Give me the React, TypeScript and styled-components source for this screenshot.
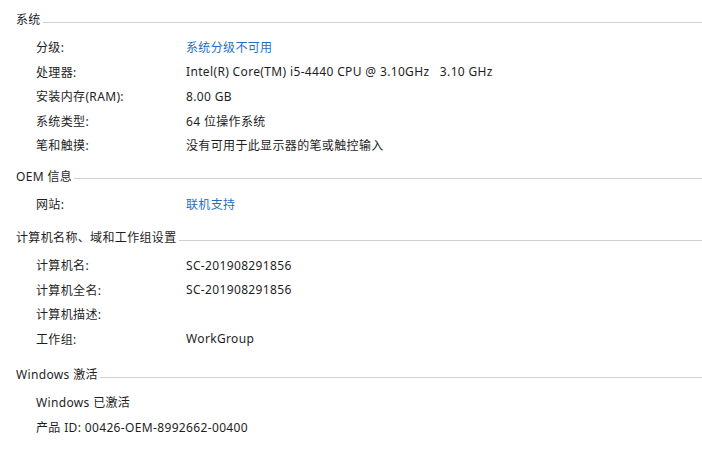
import React from 'react';
import styled, { createGlobalStyle } from 'styled-components';

const GlobalStyle = createGlobalStyle`
  html, body {
    margin: 0;
    padding: 0;
    background: #ffffff;
  }
  body {
    font-family: "Segoe UI", "Noto Sans", "Noto Sans CJK SC", sans-serif;
    font-size: 12px;
    letter-spacing: 0.35px;
    color: #1e1e1e;
  }
`;

type Row = { label: string; value?: string; link?: boolean };
type Group = { title: string; rows: Row[]; full?: boolean; top: number };

const groups: Group[] = [
  {
    title: '系统',
    top: 0,
    rows: [
      { label: '分级:', value: '系统分级不可用', link: true },
      { label: '处理器:', value: 'Intel(R) Core(TM) i5-4440 CPU @ 3.10GHz   3.10 GHz' },
      { label: '安装内存(RAM):', value: '8.00 GB' },
      { label: '系统类型:', value: '64 位操作系统' },
      { label: '笔和触摸:', value: '没有可用于此显示器的笔或触控输入' },
    ],
  },
  {
    title: 'OEM 信息',
    top: 7,
    rows: [{ label: '网站:', value: '联机支持', link: true }],
  },
  {
    title: '计算机名称、域和工作组设置',
    top: 10,
    rows: [
      { label: '计算机名:', value: 'SC-201908291856' },
      { label: '计算机全名:', value: 'SC-201908291856' },
      { label: '计算机描述:', value: '' },
      { label: '工作组:', value: 'WorkGroup' },
    ],
  },
  {
    title: 'Windows 激活',
    top: 12,
    full: true,
    rows: [{ label: 'Windows 已激活' }, { label: '产品 ID: 00426-OEM-8992662-00400' }],
  },
];

const App: React.FC = () => {
  return (
    <>
      <GlobalStyle />
      <Page>
        {groups.map((g) => (
          <Section key={g.title} $top={g.top}>
            <Header>
              <HeaderText>{g.title}</HeaderText>
              <Rule />
            </Header>
            <Rows>
              {g.rows.map((r) =>
                g.full ? (
                  <InfoRow key={r.label}>
                    <Wide>{r.label}</Wide>
                  </InfoRow>
                ) : (
                  <InfoRow key={r.label}>
                    <Label>{r.label}</Label>
                    <Value $link={r.link}>{r.value}</Value>
                  </InfoRow>
                )
              )}
            </Rows>
          </Section>
        ))}
      </Page>
    </>
  );
};

const Page = styled.div`
  width: 702px;
  padding-top: 8px;
  display: flex;
  flex-direction: column;
`;

const Section = styled.section<{ $top: number }>`
  display: flex;
  flex-direction: column;
  gap: 3px;
  margin-top: ${(p) => p.$top}px;
`;

const Header = styled.div`
  display: flex;
  align-items: center;
  height: 24px;
  padding-left: 16px;
`;

const HeaderText = styled.span`
  white-space: nowrap;
  line-height: 24px;
`;

const Rule = styled.div`
  flex: 1;
  height: 0;
  margin-left: 2px;
  margin-top: 4px;
  border-top: 1px solid #cfcfcf;
`;

const Rows = styled.div`
  display: flex;
  flex-direction: column;
  padding-left: 36px;
`;

const InfoRow = styled.div`
  display: grid;
  grid-template-columns: 150px 1fr;
  height: 24.5px;
  align-items: center;
`;

const Label = styled.span`
  white-space: nowrap;
`;

const Wide = styled.span`
  grid-column: 1 / span 2;
  white-space: nowrap;
`;

const Value = styled.span<{ $link?: boolean }>`
  white-space: pre;
  color: ${(p) => (p.$link ? '#1f6fc5' : '#1e1e1e')};
`;

export default App;
